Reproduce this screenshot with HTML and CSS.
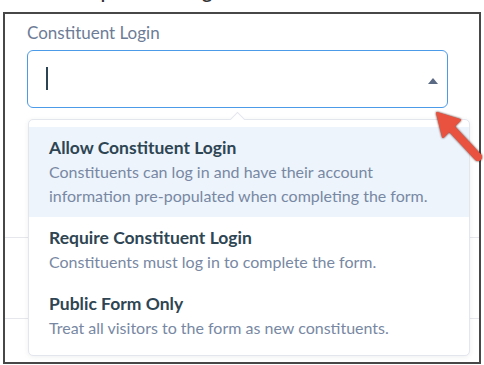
FILE: index.html
```html
<!DOCTYPE html>
<html lang="en">
<head>
    <meta charset="UTF-8">
    <meta name="viewport" content="width=device-width, initial-scale=1.0">
    <title>Constituent Login</title>
    <link rel="stylesheet" href="styles.css">
</head>
<body>
    <div class="top-cut">
        <div class="top-title">Sample Settings</div>
    </div>

    <div class="frame">
        <div class="field-group">
            <label class="field-label" for="loginSelect">Constituent Login</label>
            <div class="select-box" id="loginSelect">
                <span class="caret"></span>
                <span class="select-arrow"></span>
            </div>

            <ul class="dropdown">
                <li class="option active">
                    <div class="option-title">Allow Constituent Login</div>
                    <div class="option-desc">Constituents can log in and have their account information pre-populated when completing the form.</div>
                </li>
                <li class="option">
                    <div class="option-title">Require Constituent Login</div>
                    <div class="option-desc">Constituents must log in to complete the form.</div>
                </li>
                <li class="option">
                    <div class="option-title">Public Form Only</div>
                    <div class="option-desc">Treat all visitors to the form as new constituents.</div>
                </li>
            </ul>
        </div>
        <div class="row"></div>
    </div>

    <svg class="callout" width="60" height="60" viewBox="430 105 60 60">
        <g class="callout-shape">
            <line x1="450" y1="127" x2="478" y2="157" stroke="#e9523f" stroke-width="8" stroke-linecap="round"/>
            <polygon points="437,113 460,120 443,137" fill="#e9523f" stroke="#e9523f" stroke-width="2" stroke-linejoin="round"/>
        </g>
    </svg>
</body>
</html>
```

FILE: styles.css
```css
* {
    box-sizing: border-box;
}

body {
    margin: 0;
    background: #fff;
    font-family: 'Lato', 'Open Sans', sans-serif;
    position: relative;
    height: 365px;
    overflow: hidden;
}

.top-cut {
    height: 12px;
    overflow: hidden;
    padding-left: 51px;
}

.top-title {
    margin-top: -25px;
    font-family: 'Liberation Sans', Arial, sans-serif;
    font-size: 24px;
    line-height: 28px;
    color: #333;
}

.frame {
    margin-left: 3px;
    width: 478px;
    height: 352px;
    border: 2px solid #474747;
    background: #fff;
}

.field-group {
    position: relative;
    padding: 8px 0 0 22px;
    height: 224px;
    border-bottom: 1px solid #e6e7ec;
}

.field-label {
    display: block;
    font-size: 17px;
    line-height: 21px;
    color: #6d7c96;
}

.select-box {
    position: relative;
    margin-top: 7px;
    width: 421px;
    height: 58px;
    border: 1.5px solid #4b9be9;
    border-radius: 6px;
    background: #fff;
}

.caret {
    position: absolute;
    left: 18px;
    top: 16px;
    width: 1.5px;
    height: 23px;
    background: #2c4354;
}

.select-arrow {
    position: absolute;
    right: 9px;
    top: 27px;
    width: 0;
    height: 0;
    border-left: 5.5px solid transparent;
    border-right: 5.5px solid transparent;
    border-bottom: 6px solid #5b6a84;
}

.row {
    height: 81px;
    border-bottom: 1px solid #e6e7ec;
}

.dropdown {
    position: absolute;
    left: 23px;
    top: 105px;
    width: 442px;
    margin: 0;
    padding: 7px 0 6px;
    list-style: none;
    background: #fff;
    border: 1px solid #e4e6ee;
    border-radius: 5px;
    box-shadow: 0 1px 5px rgba(40, 50, 80, 0.08);
    z-index: 2;
}

.dropdown::before {
    content: "";
    position: absolute;
    left: 203px;
    top: -6px;
    width: 10px;
    height: 10px;
    background: #fff;
    border-left: 1px solid #e4e6ee;
    border-top: 1px solid #e4e6ee;
    transform: rotate(45deg);
}

.option {
    position: relative;
    padding: 8px 20px 9px 20px;
}

.option.active {
    background: #edf4fc;
}

.option-title {
    font-size: 17.5px;
    font-weight: 700;
    line-height: 25px;
    color: #2e4553;
}

.option-desc {
    font-size: 16px;
    line-height: 24px;
    color: #7888a3;
    padding-right: 20px;
}

.callout {
    position: absolute;
    left: 430px;
    top: 105px;
    z-index: 5;
}

.callout-shape {
    filter: drop-shadow(0 0 0.8px rgba(60, 10, 0, 0.9));
}
```
